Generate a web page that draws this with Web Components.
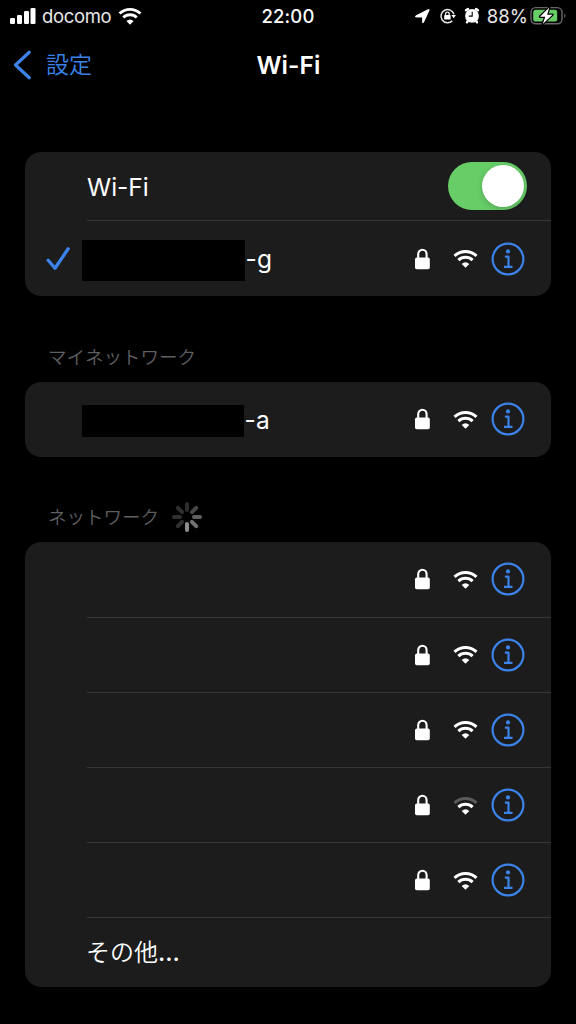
<!DOCTYPE html>
<html lang="ja">
<head>
<meta charset="utf-8">
<title>Wi-Fi</title>
<style>
html,body{margin:0;background:#000}
body{font-family:Inter,"Noto Sans CJK JP",sans-serif;color:#fff}
</style>
</head>
<body>
<settings-screen></settings-screen>
<script>
function define(name, html) {
  const t = document.createElement('template');
  t.innerHTML = html;
  customElements.define(name, class extends HTMLElement {
    constructor() {
      super();
      this.attachShadow({mode: 'open'}).append(t.content.cloneNode(true));
    }
  });
}

define('lock-icon', `<style>:host{display:block;width:17px;height:22px}svg{display:block}</style>
<svg width="17" height="22" viewBox="0 0 17 22"><rect x="1" y="9.6" width="14.8" height="11.6" rx="1.8" fill="#fff"/><path d="M4.2 10.5V6.2a4.2 4.5 0 0 1 8.4 0v4.3" fill="none" stroke="#fff" stroke-width="2.1"/></svg>`);

define('wifi-icon', `<style>:host{display:block;width:25px;height:19px}svg{display:block;width:100%;height:100%}.outer{stroke:var(--outer,#fff)}</style>
<svg viewBox="0 0 25 19" fill="none" stroke="#fff" stroke-width="3"><path class="outer" d="M1.5 6.9a15.9 15.9 0 0 1 22 0"/><path d="M5.4 11.1a10.2 10.2 0 0 1 14.2 0"/><path d="M12.5 18.8 8.7 14.9q3.8-3.4 7.6 0z" fill="#fff" stroke="none"/></svg>`);

define('info-icon', `<style>:host{display:block;width:34px;height:34px}svg{display:block}</style>
<svg width="34" height="34" viewBox="0 0 34 34" fill="none" stroke="#3b82e9" stroke-width="2.2"><circle cx="17" cy="17" r="15.4"/><circle cx="17" cy="9.4" r="2.1" fill="#3b82e9" stroke="none"/><path d="M13.9 14.7h3.6v10M13 24.8h8.5" stroke-width="2.2" stroke-linejoin="round"/></svg>`);

define('toggle-switch', `<style>:host{display:flex;box-sizing:border-box;width:79px;height:48px;border-radius:24px;background:#67ce67;justify-content:flex-end;align-items:center;padding-right:3px}
i{width:42px;height:42px;border-radius:50%;background:#fff;box-shadow:0 2px 6px #0003}</style><i></i>`);

define('busy-spinner', `<style>:host{display:block;width:32px;height:32px}svg{display:block}</style>
<svg width="32" height="32" viewBox="-16 -16 32 32" stroke-width="4" stroke-linecap="round">
<g><path d="M0-7V-13" stroke="#2c2c2c"/><path d="M0-7V-13" stroke="#474747" transform="rotate(45)"/><path d="M0-7V-13" stroke="#606060" transform="rotate(90)"/><path d="M0-7V-13" stroke="#737373" transform="rotate(135)"/><path d="M0-7V-13" stroke="#8c8c8c" transform="rotate(180)"/><path d="M0-7V-13" stroke="#303030" transform="rotate(225)"/><path d="M0-7V-13" stroke="#303030" transform="rotate(270)"/><path d="M0-7V-13" stroke="#303030" transform="rotate(315)"/></g></svg>`);

define('status-bar', `<style>
:host{display:grid;grid-template-columns:1fr auto 1fr;align-items:center;height:32px;padding:0 9px 0 10px;font-size:18.5px;line-height:32px}
div{display:flex;align-items:center}svg{display:block;flex:none}
.carrier{margin-left:6px;letter-spacing:-.35px;color:#e8e8e8}wifi-icon{margin-left:7px;width:24px;height:18px}
.time{font-weight:500;font-size:18.5px;letter-spacing:.15px;padding-right:1px}
.right{justify-content:flex-end}.pct{margin:0 2px 0 7px;color:#e8e8e8;letter-spacing:.1px}
</style>
<div><svg width="26" height="18" viewBox="0 0 26 18" fill="#fff"><rect y="11" width="5" height="6" rx="1.2"/><rect x="7" y="8" width="5" height="9" rx="1.2"/><rect x="14" y="4" width="5" height="13" rx="1.2"/><rect x="20.5" y="1" width="5" height="16" rx="1.2"/></svg><span class="carrier">docomo</span><wifi-icon></wifi-icon></div>
<span class="time">22:00</span>
<div class="right">
<svg width="15" height="16" viewBox="0 0 15 16"><path d="M.6 8 13.4 1.5q1-.4.7.7L8.4 14.6q-.6.8-.8-.2V9L1.1 9Q0 8.8.6 8z" fill="#fff" stroke="#fff" stroke-width=".9"/></svg>
<svg style="margin-left:9px" width="18" height="18" viewBox="0 0 18 18"><path d="M13.2 13.9A6.6 6.6 0 1 1 14.9 7.2" fill="none" stroke="#e4e4e4" stroke-width="1.5"/><path d="m12.4 8 4.5 0-2.2 3.2z" fill="#fff"/><rect x="5.2" y="8" width="6.4" height="4.6" rx=".7" fill="#fff"/><path d="M6.6 8V6.8a1.8 1.8 0 0 1 3.6 0V8" fill="none" stroke="#fff" stroke-width="1.2"/></svg>
<svg style="margin-left:7px;margin-top:-2px" width="16" height="17" viewBox="0 0 16 17"><circle cx="8" cy="8.9" r="6.9" fill="#fff"/><path d="m2 3.3 2-1.4M14 3.3l-2-1.4M3.8 14 3 15.3M12.2 14l.8 1.3" stroke="#fff" stroke-width="2.4" stroke-linecap="round"/><path d="M8.2 4.8v4.3H4.8" fill="none" stroke="#000" stroke-width="1.1"/></svg>
<span class="pct">88%</span>
<svg width="37" height="20" viewBox="0 0 37 20"><rect x="1" y="1.6" width="31" height="16.2" rx="4.8" fill="none" stroke="#686868" stroke-width="1.4"/><path d="M34.3 7.2q2.4 2.5 0 5z" fill="#686868"/><rect x="3.2" y="3.8" width="24" height="11.8" rx="2.6" fill="#67ce67"/><path d="M19.3 1.5 10 10.7h5.3L12.8 18l9.7-9.3h-5.4z" fill="#fff" stroke="#000" stroke-width="2.4" paint-order="stroke" stroke-linejoin="round"/></svg>
</div>`);

define('nav-bar', `<style>
:host{display:grid;grid-template-columns:1fr auto 1fr;align-items:center;height:66px;padding:0 12px 0 13px}
.back{display:flex;align-items:center;gap:15px;color:#3b82e9;font-size:23px;font-weight:350;line-height:30px}
b{font-weight:600;font-size:24.5px;line-height:30px;letter-spacing:.1px}svg{display:block}
</style>
<div class="back"><svg width="18" height="30" viewBox="0 0 18 30"><path d="M16.3 2.3 2.5 15 16.3 27.7" fill="none" stroke="#3b82e9" stroke-width="3.2" stroke-linecap="round" stroke-linejoin="round"/></svg><span>設定</span></div>
<b>Wi-Fi</b><span></span>`);

define('list-card', `<style>:host{display:block;margin:0 25px;background:#1c1c1d;border-radius:16px;overflow:hidden}</style><slot></slot>`);

define('list-row', `<style>
:host{display:flex;height:75.2px}
.lead{width:62px;flex:none;display:flex;align-items:center;justify-content:flex-end}
.body{flex:1;display:flex;align-items:center;box-sizing:border-box;padding-right:24px;border-bottom:1px solid #363637}
:host([last]) .body{border:0}
.label{flex:1;display:flex;align-items:center;font-size:24.5px;line-height:32px;padding-top:1px}
</style>
<div class="lead"><slot name="lead"></slot></div><div class="body"><div class="label"><slot></slot></div><slot name="end"></slot></div>`);

define('network-icons', `<style>:host{display:flex;align-items:center;margin-right:2px}wifi-icon{margin:0 13px 0 22px}:host([weak]) wifi-icon{--outer:#5b5b5c}</style>
<lock-icon></lock-icon><wifi-icon></wifi-icon><info-icon></info-icon>`);

define('masked-name', `<style>:host{display:flex;align-items:center;margin-left:-5px}i{width:var(--w);height:var(--h);background:#000;margin-top:var(--t,0)}span{margin-left:.5px;letter-spacing:.2px}</style><i></i><span><slot></slot></span>`);

define('section-title', `<style>:host{display:flex;align-items:center;gap:12px;box-sizing:border-box;padding-left:48px;font-size:18.5px;font-weight:350;color:#5f5f61;line-height:28px}</style><slot></slot>`);

define('settings-screen', `<style>
:host{display:block;width:576px;height:1024px;background:#000;overflow:hidden}
.first{margin-top:54px}
section-title{height:50px;margin-top:35.5px}
.check{display:block;margin-right:16px}
</style>
<status-bar></status-bar><nav-bar></nav-bar>
<list-card class="first">
<list-row style="height:69px"><span style="letter-spacing:0">Wi-Fi</span><toggle-switch slot="end"></toggle-switch></list-row>
<list-row last><svg class="check" slot="lead" width="25" height="26" viewBox="0 0 25 26"><path d="M2.2 14.2 9 22.2 22.2 2.8" fill="none" stroke="#3b82e9" stroke-width="3.3" stroke-linecap="round" stroke-linejoin="round"/></svg><masked-name style="--w:163px;--h:41px;--t:2px">-g</masked-name><network-icons slot="end"></network-icons></list-row>
</list-card>
<section-title>マイネットワーク</section-title>
<list-card><list-row last><masked-name style="--w:162px;--h:32px;--t:2px">-a</masked-name><network-icons slot="end"></network-icons></list-row></list-card>
<section-title>ネットワーク<busy-spinner></busy-spinner></section-title>
<list-card>
<list-row><network-icons slot="end"></network-icons></list-row>
<list-row><network-icons slot="end"></network-icons></list-row>
<list-row><network-icons slot="end"></network-icons></list-row>
<list-row><network-icons slot="end" weak></network-icons></list-row>
<list-row><network-icons slot="end"></network-icons></list-row>
<list-row last style="height:69px"><span style="font-size:24px;font-weight:350;margin-left:-1px">その他<span style="font-weight:500">...</span></span></list-row>
</list-card>`);
</script>
</body>
</html>
